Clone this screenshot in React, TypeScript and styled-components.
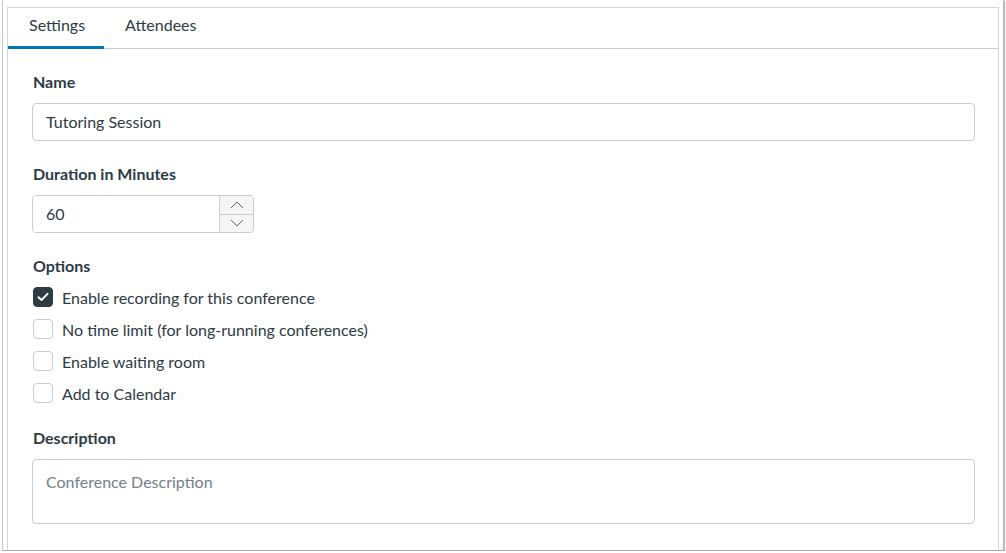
import React, { useState } from 'react';
import styled, { createGlobalStyle } from 'styled-components';

const GlobalStyle = createGlobalStyle`
  html, body {
    margin: 0;
    padding: 0;
    background: #ffffff;
  }
  body {
    font-family: Lato, "Noto Sans", "Liberation Sans", sans-serif;
    color: #2d3b45;
  }
`;

type Option = { id: string; label: string; checked: boolean };

const initialOptions: Option[] = [
  { id: 'recording', label: 'Enable recording for this conference', checked: true },
  { id: 'nolimit', label: 'No time limit (for long-running conferences)', checked: false },
  { id: 'waiting', label: 'Enable waiting room', checked: false },
  { id: 'calendar', label: 'Add to Calendar', checked: false },
];

function App() {
  const [tab, setTab] = useState('settings');
  const [options, setOptions] = useState(initialOptions);

  const toggle = (id: string) =>
    setOptions((prev) => prev.map((o) => (o.id === id ? { ...o, checked: !o.checked } : o)));

  return (
    <>
      <GlobalStyle />
      <StyledFrame>
        <StyledPanel>
          <StyledTabBar>
            <StyledTab $active={tab === 'settings'} onClick={() => setTab('settings')}>
              Settings
            </StyledTab>
            <StyledTab $active={tab === 'attendees'} onClick={() => setTab('attendees')}>
              Attendees
            </StyledTab>
          </StyledTabBar>

          <StyledForm>
            <StyledField>
              <StyledLabel>Name</StyledLabel>
              <StyledTextInput defaultValue="Tutoring Session" />
            </StyledField>

            <StyledField>
              <StyledLabel>Duration in Minutes</StyledLabel>
              <StyledNumberBox>
                <StyledNumberInput defaultValue="60" />
                <StyledSpinner>
                  <StyledSpinButton>
                    <svg width="14" height="8" viewBox="0 0 14 8">
                      <polyline points="1,7 7,1 13,7" fill="none" stroke="#556572" strokeWidth="1" />
                    </svg>
                  </StyledSpinButton>
                  <StyledSpinButton $bottom>
                    <svg width="14" height="8" viewBox="0 0 14 8">
                      <polyline points="1,1 7,7 13,1" fill="none" stroke="#556572" strokeWidth="1" />
                    </svg>
                  </StyledSpinButton>
                </StyledSpinner>
              </StyledNumberBox>
            </StyledField>

            <StyledField>
              <StyledLabel>Options</StyledLabel>
              <StyledOptionList>
                {options.map((o) => (
                  <StyledOptionRow key={o.id} onClick={() => toggle(o.id)}>
                    <StyledCheckbox $checked={o.checked}>
                      {o.checked && (
                        <svg width="12" height="10" viewBox="0 0 12 10">
                          <polyline
                            points="1.5,5.2 4.5,8 10.5,1.8"
                            fill="none"
                            stroke="#ffffff"
                            strokeWidth="1.9"
                            strokeLinecap="round"
                            strokeLinejoin="round"
                          />
                        </svg>
                      )}
                    </StyledCheckbox>
                    <StyledOptionText>{o.label}</StyledOptionText>
                  </StyledOptionRow>
                ))}
              </StyledOptionList>
            </StyledField>

            <StyledField $last>
              <StyledLabel>Description</StyledLabel>
              <StyledTextArea placeholder="Conference Description" />
            </StyledField>
          </StyledForm>
        </StyledPanel>
      </StyledFrame>
    </>
  );
}

const StyledFrame = styled.div`
  box-sizing: border-box;
  margin-left: 2px;
  width: 1002px;
  height: 551px;
  padding: 7px 4px 0 4px;
  border-left: 1px solid #c9c9c9;
  border-right: 1px solid #b5b5b5;
  border-bottom: 1px solid #a8a8a8;
  box-shadow: 1px 1px 1px rgba(0, 0, 0, 0.25);
  display: flex;
`;

const StyledPanel = styled.div`
  flex: 1;
  display: flex;
  flex-direction: column;
  border: 1px solid #d1d6da;
  border-bottom: none;
`;

const StyledTabBar = styled.div`
  display: flex;
  height: 40px;
  border-bottom: 1px solid #c7cdd1;
`;

const StyledTab = styled.div<{ $active?: boolean }>`
  box-sizing: border-box;
  display: flex;
  align-items: center;
  padding: 0 19px 6px 21px;
  font-size: 16px;
  color: #2d3b45;
  cursor: pointer;
  border-bottom: 3px solid ${(p) => (p.$active ? '#0374b5' : 'transparent')};
  margin-bottom: -1px;
`;

const StyledForm = styled.div`
  display: flex;
  flex-direction: column;
  padding: 23px 23px 0 24px;
`;

const StyledField = styled.div<{ $last?: boolean }>`
  display: flex;
  flex-direction: column;
  margin-bottom: ${(p) => (p.$last ? '0' : '23px')};
`;

const StyledLabel = styled.div`
  font-size: 16px;
  font-weight: 700;
  line-height: 20px;
  color: #2d3b45;
  margin-bottom: 11px;
  padding-left: 1px;
`;

const StyledTextInput = styled.input`
  box-sizing: border-box;
  height: 38px;
  width: 100%;
  padding: 0 13px 2px;
  font-family: inherit;
  font-size: 16px;
  color: #2d3b45;
  border: 1px solid #c7cdd1;
  border-radius: 4px;
  outline: none;
`;

const StyledNumberBox = styled.div`
  display: flex;
  width: 222px;
  height: 38px;
  box-sizing: border-box;
  border: 1px solid #c7cdd1;
  border-radius: 4px;
  overflow: hidden;
`;

const StyledNumberInput = styled.input`
  flex: 1;
  min-width: 0;
  border: none;
  outline: none;
  padding: 0 13px 2px;
  font-family: inherit;
  font-size: 16px;
  color: #2d3b45;
`;

const StyledSpinner = styled.div`
  width: 33px;
  display: flex;
  flex-direction: column;
  border-left: 1px solid #c7cdd1;
  background: #f5f5f5;
`;

const StyledSpinButton = styled.div<{ $bottom?: boolean }>`
  flex: 1;
  display: flex;
  align-items: center;
  justify-content: center;
  border-top: ${(p) => (p.$bottom ? '1px solid #c7cdd1' : 'none')};
`;

const StyledOptionList = styled.div`
  display: flex;
  flex-direction: column;
  margin-top: -6px;
  margin-bottom: -4px;
`;

const StyledOptionRow = styled.label`
  display: flex;
  align-items: center;
  height: 32px;
  cursor: pointer;
`;

const StyledCheckbox = styled.span<{ $checked?: boolean }>`
  box-sizing: border-box;
  width: 20px;
  height: 20px;
  margin-left: 1px;
  margin-right: 9px;
  display: flex;
  align-items: center;
  justify-content: center;
  border-radius: 4px;
  border: 1px solid ${(p) => (p.$checked ? '#2d3b45' : '#c7cdd1')};
  background: ${(p) => (p.$checked ? '#2d3b45' : '#ffffff')};
`;

const StyledOptionText = styled.span`
  font-size: 16px;
  color: #2d3b45;
`;

const StyledTextArea = styled.textarea`
  box-sizing: border-box;
  width: 100%;
  height: 65px;
  padding: 12px 13px;
  resize: none;
  font-family: inherit;
  font-size: 16px;
  line-height: 20px;
  color: #2d3b45;
  border: 1px solid #c7cdd1;
  border-radius: 4px;
  outline: none;

  &::placeholder {
    color: #73818c;
  }
`;

export default App;
